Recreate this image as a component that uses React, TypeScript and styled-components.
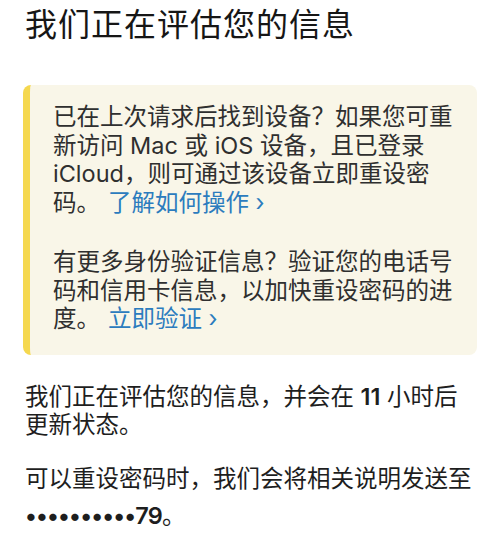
import React from "react";
import styled, { createGlobalStyle } from "styled-components";

const GlobalStyle = createGlobalStyle`
    body {
        margin: 0;
        background: #ffffff;
        font-family: "Inter", "Noto Sans CJK SC", sans-serif;
    }
`;

const Page = styled.div`
    width: 500px;
    height: 533px;
    overflow: hidden;
    background: #ffffff;
`;

const Title = styled.h1`
    margin: 5px 0 0 25px;
    font-size: 32px;
    line-height: 40px;
    font-weight: 400;
    letter-spacing: 1px;
    color: #161616;
`;

const Notice = styled.div`
    margin: 40px 23px 0 23px;
    padding: 18px 20px 21px 23px;
    background: #f9f6e8;
    border-left: 7px solid #f5d84f;
    border-radius: 8px;
    display: flex;
    flex-direction: column;
    gap: 31px;
`;

const NoticeText = styled.p`
    margin: 0;
    font-size: 23.5px;
    line-height: 28.5px;
    color: #2f2f2f;
    white-space: nowrap;
`;

const Link = styled.a`
    color: #2c7cbe;
    text-decoration: none;
    margin-left: 8px;
`;

const Body = styled.div`
    margin: 28px 0 0 25px;
    display: flex;
    flex-direction: column;
    gap: 25px;
`;

const BodyText = styled.p`
    margin: 0;
    font-size: 23.5px;
    line-height: 28.5px;
    color: #1e1e1e;
    white-space: nowrap;
`;

const Strong = styled.span`
    font-weight: 600;
`;

const Masked = styled.span`
    display: inline-block;
    margin-top: 9px;
    font-weight: 600;
    letter-spacing: -0.8px;
`;

const App = () => {
    return (
        <>
            <GlobalStyle />
            <Page>
                <Title>我们正在评估您的信息</Title>
                <Notice>
                    <NoticeText>
                        已在上次请求后找到设备？如果您可重
                        <br />
                        新访问 Mac 或 iOS 设备，且已登录
                        <br />
                        iCloud，则可通过该设备立即重设密
                        <br />
                        码。<Link href="#">了解如何操作 ›</Link>
                    </NoticeText>
                    <NoticeText>
                        有更多身份验证信息？验证您的电话号
                        <br />
                        码和信用卡信息，以加快重设密码的进
                        <br />
                        度。<Link href="#">立即验证 ›</Link>
                    </NoticeText>
                </Notice>
                <Body>
                    <BodyText>
                        我们正在评估您的信息，并会在 <Strong>11</Strong> 小时后
                        <br />
                        更新状态。
                    </BodyText>
                    <BodyText>
                        可以重设密码时，我们会将相关说明发送至
                        <br />
                        <Masked>••••••••••79</Masked>。
                    </BodyText>
                </Body>
            </Page>
        </>
    );
};

export default App;
